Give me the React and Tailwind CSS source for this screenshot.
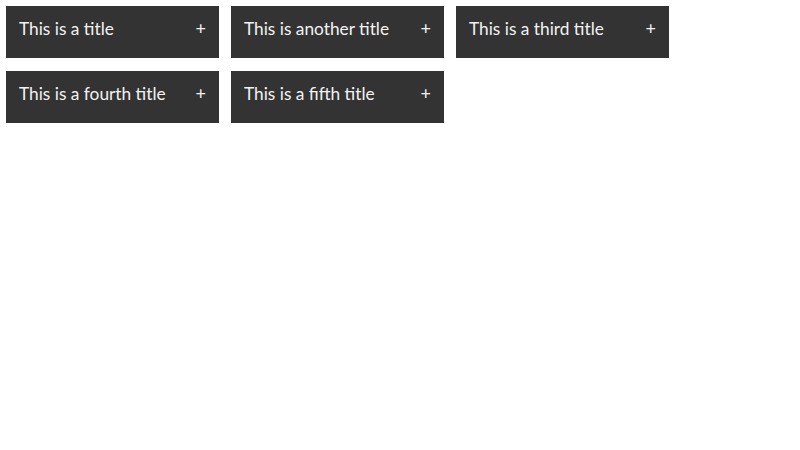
const titles = [
  'This is a title',
  'This is another title',
  'This is a third title',
  'This is a fourth title',
  'This is a fifth title',
];

export default function App() {
  return (
    <div className="min-h-[450px] bg-white p-[6px]" style={{ fontFamily: 'Lato, "Open Sans", sans-serif' }}>
      <div className="grid grid-cols-[repeat(3,213px)] gap-x-[12px] gap-y-[13px]">
        {titles.map((t) => (
          <div
            key={t}
            className="flex h-[52px] items-center justify-between bg-[#333333] pb-[7px] pl-[13px] pr-[13px] text-[17.3px] text-[#f2f2f2]"
          >
            <span>{t}</span>
            <span className="text-[18px]">+</span>
          </div>
        ))}
      </div>
    </div>
  );
}
